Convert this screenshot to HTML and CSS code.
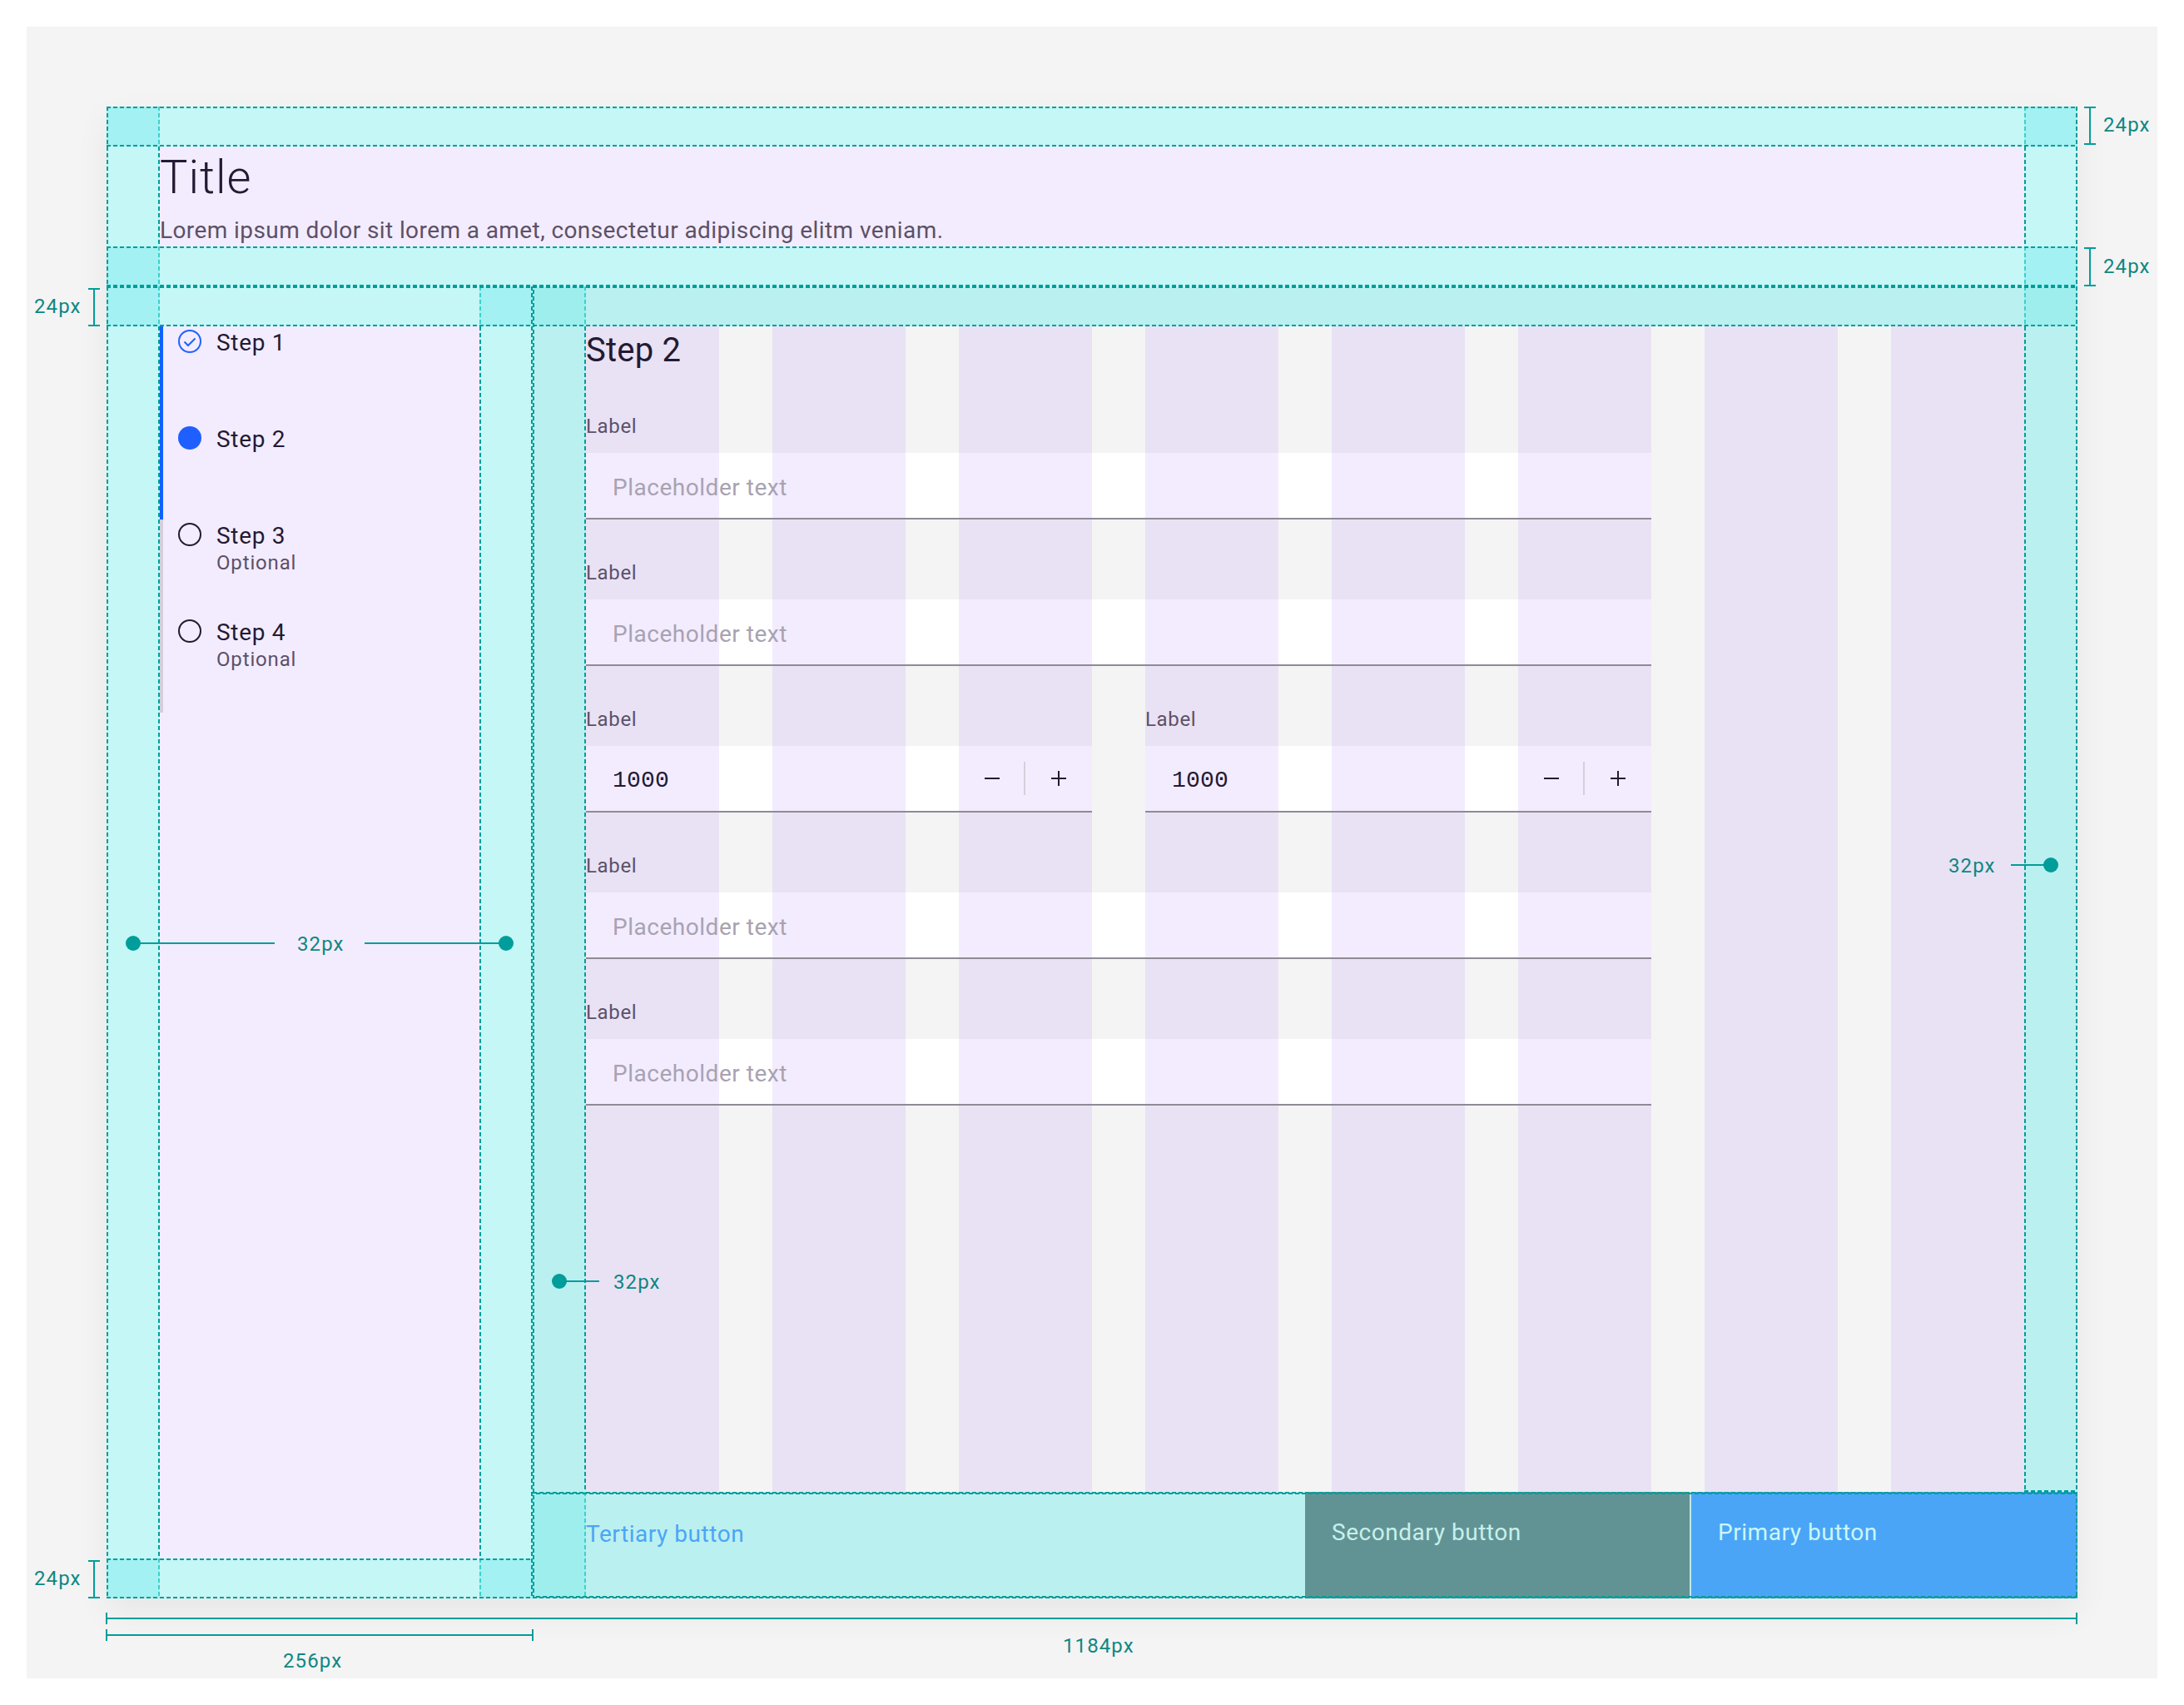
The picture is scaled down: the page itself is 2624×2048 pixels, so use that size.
FILE: index.html
```html
<!DOCTYPE html>
<html lang="en">
<head>
    <meta charset="UTF-8">
    <title>Full page wizard spec</title>
    <link rel="stylesheet" href="styles.css">
</head>
<body>

    <div class="sheet">
        <div class="frame">
            <header class="page-head">
                <div class="page-head-inner">
                    <h1 class="page-title">Title</h1>
                    <p class="page-desc">Lorem ipsum dolor sit lorem a amet, consectetur adipiscing elitm veniam.</p>
                </div>
            </header>

            <div class="page-body">
                <nav class="nav">
                    <ul class="steps">
                        <li class="step step-done">
                            <svg class="step-icon" viewBox="0 0 28 28">
                                <circle class="ring-blue" cx="14" cy="14" r="13"/>
                                <path class="check" d="M7.5 14.5l4.5 4.5 8.5-8.5"/>
                            </svg>
                            <div class="step-text"><div class="step-name">Step 1</div></div>
                        </li>
                        <li class="step step-done">
                            <svg class="step-icon" viewBox="0 0 28 28">
                                <circle class="dot-blue" cx="14" cy="14" r="14"/>
                            </svg>
                            <div class="step-text"><div class="step-name">Step 2</div></div>
                        </li>
                        <li class="step">
                            <svg class="step-icon" viewBox="0 0 28 28">
                                <circle class="ring-dark" cx="14" cy="14" r="13"/>
                            </svg>
                            <div class="step-text">
                                <div class="step-name">Step 3</div>
                                <div class="step-note">Optional</div>
                            </div>
                        </li>
                        <li class="step">
                            <svg class="step-icon" viewBox="0 0 28 28">
                                <circle class="ring-dark" cx="14" cy="14" r="13"/>
                            </svg>
                            <div class="step-text">
                                <div class="step-name">Step 4</div>
                                <div class="step-note">Optional</div>
                            </div>
                        </li>
                    </ul>
                </nav>

                <main class="main">
                    <div class="main-body">
                        <div class="columns">
                            <h2 class="form-title">Step 2</h2>
                            <form class="form">
                                <div class="field field-wide">
                                    <div class="label">Label</div>
                                    <div class="input placeholder">Placeholder text</div>
                                </div>
                                <div class="field field-wide">
                                    <div class="label">Label</div>
                                    <div class="input placeholder">Placeholder text</div>
                                </div>
                                <div class="field">
                                    <div class="label">Label</div>
                                    <div class="input number">
                                        <span class="number-value">1000</span>
                                        <span class="stepper">
                                            <svg class="stepper-btn" viewBox="0 0 80 40"><path d="M31 20h18"/></svg>
                                            <span class="stepper-sep"></span>
                                            <svg class="stepper-btn" viewBox="0 0 80 40"><path d="M31 20h18M40 11v18"/></svg>
                                        </span>
                                    </div>
                                </div>
                                <div class="field">
                                    <div class="label">Label</div>
                                    <div class="input number">
                                        <span class="number-value">1000</span>
                                        <span class="stepper">
                                            <svg class="stepper-btn" viewBox="0 0 80 40"><path d="M31 20h18"/></svg>
                                            <span class="stepper-sep"></span>
                                            <svg class="stepper-btn" viewBox="0 0 80 40"><path d="M31 20h18M40 11v18"/></svg>
                                        </span>
                                    </div>
                                </div>
                                <div class="field field-wide">
                                    <div class="label">Label</div>
                                    <div class="input placeholder">Placeholder text</div>
                                </div>
                                <div class="field field-wide">
                                    <div class="label">Label</div>
                                    <div class="input placeholder">Placeholder text</div>
                                </div>
                            </form>
                        </div>
                    </div>
                    <footer class="actions">
                        <div class="btn btn-tertiary">Tertiary button</div>
                        <div class="btn btn-secondary">Secondary button</div>
                        <div class="btn btn-primary">Primary button</div>
                    </footer>
                </main>
            </div>
        </div>
    </div>

    <!-- redline layer: corners, guides and measurements over the page -->
    <svg class="redlines" viewBox="0 0 2624 2048">
        <g class="corner">
            <rect x="128" y="128" width="64" height="48"/>
            <rect x="2432" y="128" width="64" height="48"/>
            <rect x="128" y="296" width="64" height="48"/>
            <rect x="2432" y="296" width="64" height="48"/>
            <rect x="128" y="344" width="64" height="48"/>
            <rect x="576" y="344" width="64" height="48"/>
            <rect x="128" y="1872" width="64" height="48"/>
            <rect x="576" y="1872" width="64" height="48"/>
        </g>
        <g class="corner-main">
            <rect x="640" y="344" width="64" height="48"/>
            <rect x="2432" y="344" width="64" height="48"/>
            <rect x="640" y="1792" width="64" height="128"/>
        </g>

        <g class="guide-light">
            <path d="M191 128V176M191 296V392M191 1872V1920"/>
            <path d="M577 344V392M577 1872V1920"/>
            <path d="M703 344V392M703 1792V1920"/>
            <path d="M2433 128V176M2433 296V392"/>
        </g>

        <g class="guide">
            <path d="M128 129H2496M128 175H2496M128 297H2496M128 343H2496M128 345H2496M128 391H2496"/>
            <path d="M128 1873H640M128 1919H2496M640 1793H2496M2432 1791H2496"/>
            <path d="M644 1794H2496M644 1918H2496"/>
            <path d="M129 128V1920M2495 128V1920"/>
            <path d="M191 176V296M191 392V1872"/>
            <path d="M577 392V1872"/>
            <path d="M639 344V1920M641 348V1920"/>
            <path d="M703 392V1792"/>
            <path d="M2433 176V296M2433 392V1792"/>
        </g>

        <g class="measure">
            <path d="M106 347H120M113 347V391M106 391H120"/>
            <path d="M106 1875H120M113 1875V1919M106 1919H120"/>
            <path d="M2504 129H2518M2511 129V173M2504 173H2518"/>
            <path d="M2504 298H2518M2511 298V343M2504 343H2518"/>
            <path d="M128 1937V1951M128 1944H2495M2495 1937V1951"/>
            <path d="M128 1957V1971M128 1964H640M640 1957V1971"/>
            <path d="M160 1133H330M438 1133H608"/>
            <path d="M672 1539H720"/>
            <path d="M2416 1039H2464"/>
        </g>

        <g class="measure-dot">
            <circle cx="160" cy="1133" r="9"/>
            <circle cx="608" cy="1133" r="9"/>
            <circle cx="672" cy="1539" r="9"/>
            <circle cx="2464" cy="1039" r="9"/>
        </g>

        <text class="dim" x="41" y="376">24px</text>
        <text class="dim" x="41" y="1904">24px</text>
        <text class="dim" x="2527" y="158">24px</text>
        <text class="dim" x="2527" y="328">24px</text>
        <text class="dim" x="357" y="1142">32px</text>
        <text class="dim" x="737" y="1548">32px</text>
        <text class="dim" x="2341" y="1048">32px</text>
        <text class="dim" x="340" y="2003">256px</text>
        <text class="dim" x="1277" y="1985">1184px</text>
    </svg>

</body>
</html>
```

FILE: styles.css
```css
* {
    box-sizing: border-box;
}

body {
    font-family: Roboto, Arial, sans-serif;
    background: #fff;
    color: #231a33;
    margin: 0;
    position: relative;
    width: 2624px;
    height: 2048px;
    padding: 32px;
}

.sheet {
    background: #f4f4f4;
    width: 2560px;
    height: 1984px;
    padding: 96px;
}

.frame {
    width: 2368px;
    height: 1792px;
    box-shadow: 0 16px 40px rgba(0, 0, 0, 0.06);
}

/* page header */
.page-head {
    background: #c4f7f6;
    padding: 48px 64px;
    height: 216px;
}

.page-head-inner {
    background: #f3ecfe;
    height: 120px;
}

.page-title {
    font-size: 56px;
    font-weight: 300;
    line-height: 75px;
    letter-spacing: 1px;
    margin: 0 0 6px;
}

.page-desc {
    font-size: 28px;
    line-height: 39px;
    color: #5c5168;
    margin: 0;
    letter-spacing: 0.41px;
}

.page-body {
    display: flex;
    height: 1576px;
}

/* left nav */
.nav {
    width: 512px;
    background: #c4f7f6;
    padding: 48px 64px;
}

.steps {
    list-style: none;
    background: #f3ecfe;
    height: 1480px;
    margin: 0;
    padding: 0;
}

.step {
    display: flex;
    gap: 18px;
    height: 116px;
    padding: 4px 0 0 18px;
    border-left: 4px solid #d3cfdc;
}

.step-done {
    border-left-color: #0f62fe;
}

.step-icon {
    width: 28px;
    height: 28px;
    flex: none;
}

.ring-blue {
    fill: none;
    stroke: #1f62ff;
    stroke-width: 2;
}

.check {
    fill: none;
    stroke: #1f62ff;
    stroke-width: 2;
}

.dot-blue {
    fill: #1f5fff;
}

.ring-dark {
    fill: none;
    stroke: #231a33;
    stroke-width: 2;
}

.step-text {
    padding-top: 2px;
}

.step-name {
    font-size: 28px;
    line-height: 28px;
    letter-spacing: 0.7px;
}

.step-note {
    font-size: 24px;
    line-height: 32px;
    color: #5c5168;
    letter-spacing: 0.85px;
    margin-top: 2px;
}

/* main column */
.main {
    width: 1856px;
    display: flex;
    flex-direction: column;
}

.main-body {
    background: #bbf0f0;
    padding: 48px 64px 0;
    height: 1448px;
}

.columns {
    height: 1400px;
    background: repeating-linear-gradient(90deg, #e9e2f4 0 160px, #f4f4f4 160px 224px);
}

.form-title {
    font-size: 40px;
    font-weight: 400;
    line-height: 58px;
    letter-spacing: 0.2px;
    margin: 0;
}

.form {
    width: 1280px;
    display: grid;
    grid-template-columns: 1fr 1fr;
    column-gap: 64px;
    row-gap: 48px;
    margin-top: 46px;
}

.field-wide {
    grid-column: 1 / 3;
}

.label {
    font-size: 24px;
    line-height: 32px;
    color: #5c5168;
    letter-spacing: 0.64px;
    margin-bottom: 16px;
}

.input {
    height: 80px;
    border-bottom: 2px solid #8f8a96;
    background: repeating-linear-gradient(90deg, #f3ecfe 0 160px, #fff 160px 224px);
    display: flex;
    align-items: center;
    justify-content: space-between;
    padding-left: 32px;
    font-size: 28px;
}

.placeholder {
    color: #a8a2b2;
    letter-spacing: 0.52px;
    padding-top: 4px;
}

.number-value {
    font-family: "Liberation Mono", monospace;
    letter-spacing: 0.2px;
    margin-top: 5px;
}

.stepper {
    display: flex;
    align-items: center;
}

.stepper-btn {
    width: 80px;
    height: 40px;
}

.stepper-btn path {
    fill: none;
    stroke: #231a33;
    stroke-width: 2;
}

.stepper-sep {
    width: 2px;
    height: 40px;
    margin-left: -2px;
    background: #d3cfdc;
}

/* footer buttons */
.actions {
    display: flex;
    height: 128px;
}

.btn {
    font-size: 28px;
    line-height: 36px;
    letter-spacing: 0.54px;
    padding: 31px 32px 0;
}

.btn-tertiary {
    flex: 1;
    background: #bbf0f0;
    color: #4ba5f6;
    padding: 33px 64px 0;
}

.btn-secondary {
    width: 464px;
    background: #629394;
    color: #c7f0ec;
    border-right: 2px solid #c0e8e8;
}

.btn-primary {
    width: 464px;
    background: #4ba5f6;
    color: #c9f7fb;
}

/* redline layer */
.redlines {
    position: absolute;
    top: 0;
    left: 0;
    width: 2624px;
    height: 2048px;
}

.corner {
    fill: #a3f1f2;
}

.corner-main {
    fill: #9feeee;
}

.guide path {
    fill: none;
    stroke: #009d9a;
    stroke-width: 2;
    stroke-dasharray: 5 3;
}

.guide-light path {
    fill: none;
    stroke: #3dd0cc;
    stroke-width: 2;
    stroke-dasharray: 5 3;
}

.measure path {
    fill: none;
    stroke: #009d9a;
    stroke-width: 2;
}

.measure-dot {
    fill: #009d9a;
}

.dim {
    font-family: Roboto, Arial, sans-serif;
    font-size: 24px;
    fill: #0e8782;
    letter-spacing: 1.1px;
}
```
